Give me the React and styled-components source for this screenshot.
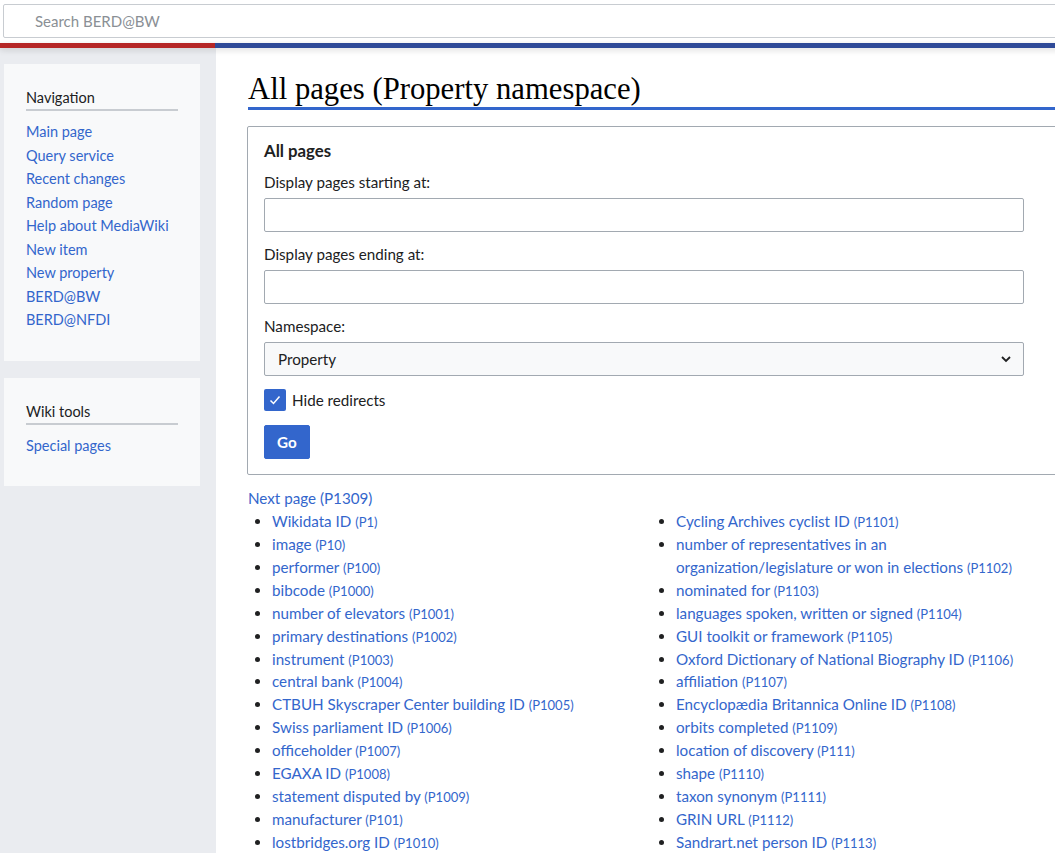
import React from "react";
import styled, { createGlobalStyle } from "styled-components";

const GlobalStyle = createGlobalStyle`
  html, body {
    margin: 0;
    padding: 0;
    overflow: hidden;
    background: #ffffff;
  }
  body {
    font-family: Lato, "Noto Sans", "Liberation Sans", sans-serif;
    color: #202122;
  }
`;

const Page = styled.div`
  width: 1120px;
  min-height: 853px;
  display: flex;
  flex-direction: column;
`;

const Header = styled.header`
  padding-top: 4px;
  background: #ffffff;
`;

const SearchInput = styled.input`
  box-sizing: border-box;
  display: block;
  width: 1100px;
  height: 34px;
  margin: 0 0 0 3px;
  padding: 0 0 0 31px;
  border: 1px solid #c8ccd1;
  border-radius: 2px;
  font-family: Lato, "Noto Sans", sans-serif;
  font-size: 15px;
  color: #202122;
  outline: none;
  &::placeholder {
    color: #8a8f95;
  }
`;

const Stripe = styled.div`
  margin-top: 5px;
  height: 5px;
  display: flex;
  position: relative;
  z-index: 1;
  box-shadow: 0 2px 6px rgba(0, 0, 0, 0.14);
`;

const StripePart = styled.div`
  width: ${(p) => p.$width || "auto"};
  flex: ${(p) => (p.$width ? "none" : "1")};
  background: ${(p) => p.$color};
`;

const Body = styled.div`
  flex: 1;
  display: flex;
`;

const Sidebar = styled.nav`
  width: 212px;
  flex: none;
  background: #eaecf0;
  padding: 16px 0 0 4px;
  display: flex;
  flex-direction: column;
  gap: 17px;
`;

const Portlet = styled.div`
  width: 196px;
  box-sizing: border-box;
  background: #f8f9fa;
  padding: 23px 22px 29px 22px;
`;

const PortletHeading = styled.h3`
  margin: 0;
  font-size: 14.5px;
  font-weight: 400;
  line-height: 21px;
  padding-bottom: 1px;
  border-bottom: 2px solid #c8ccd1;
  color: #202122;
`;

const PortletList = styled.ul`
  list-style: none;
  margin: 9px 0 0 0;
  padding: 0;
`;

const PortletItem = styled.li`
  font-size: 14.5px;
  line-height: 23.5px;
`;

const Link = styled.a`
  color: #3366cc;
  text-decoration: none;
`;

const Main = styled.main`
  flex: 1;
  padding: 24px 0 0 32px;
`;

const Title = styled.h1`
  margin: 0;
  font-family: "Liberation Serif", "DejaVu Serif", serif;
  font-weight: 400;
  font-size: 30.7px;
  line-height: 35px;
  color: #000000;
  border-bottom: 3px solid #3366cc;
`;

const FormBox = styled.fieldset`
  margin: 16px 0 0 -1px;
  padding: 13px 16px 15px 16px;
  border: 1px solid #a2a9b1;
  border-radius: 2px;
  min-width: 0;
`;

const Legend = styled.div`
  font-size: 16.8px;
  font-weight: 700;
  line-height: 22px;
  margin-bottom: 9px;
`;

const Field = styled.div`
  margin-bottom: ${(p) => p.$gap || "11px"};
`;

const Label = styled.label`
  display: block;
  font-size: 15.2px;
  line-height: 22px;
  margin-bottom: 5px;
`;

const TextInput = styled.input`
  display: block;
  box-sizing: border-box;
  width: 760px;
  height: 34px;
  margin: 0;
  border: 1px solid #a2a9b1;
  border-radius: 2px;
  background: #ffffff;
  font-size: 15px;
`;

const Select = styled.div`
  box-sizing: border-box;
  width: 760px;
  height: 34px;
  border: 1px solid #a2a9b1;
  border-radius: 2px;
  background: #f8f9fa;
  display: flex;
  align-items: center;
  justify-content: space-between;
  padding: 0 11px 0 13px;
  font-size: 15.2px;
  color: #202122;
`;

const CheckRow = styled.label`
  display: flex;
  align-items: center;
  gap: 6px;
  font-size: 15.2px;
  line-height: 22px;
  margin-bottom: 14px;
`;

const CheckBox = styled.span`
  width: 22px;
  height: 22px;
  box-sizing: border-box;
  border-radius: 2px;
  background: #3366cc;
  display: flex;
  align-items: center;
  justify-content: center;
`;

const GoButton = styled.button`
  height: 34px;
  padding: 0 12px;
  border: 1px solid #3366cc;
  border-radius: 2px;
  background: #3366cc;
  color: #ffffff;
  font-family: Lato, "Noto Sans", sans-serif;
  font-size: 15.2px;
  font-weight: 700;
  display: block;
`;

const NextLink = styled(Link)`
  display: block;
  margin-top: 12px;
  font-size: 15.2px;
  line-height: 22.9px;
`;

const Columns = styled.div`
  display: grid;
  grid-template-columns: 404px 404px;
`;

const PageList = styled.ul`
  margin: 0;
  padding: 0 20px 0 24px;
  list-style: disc;
`;

const PageItem = styled.li`
  font-size: 15.2px;
  line-height: 22.93px;
  &::marker {
    color: #202122;
  }
`;

const PropId = styled.span`
  font-size: 13px;
  line-height: 1;
`;

const navLinks = [
  "Main page",
  "Query service",
  "Recent changes",
  "Random page",
  "Help about MediaWiki",
  "New item",
  "New property",
  "BERD@BW",
  "BERD@NFDI",
];

const leftColumn = [
  ["Wikidata ID", "P1"],
  ["image", "P10"],
  ["performer", "P100"],
  ["bibcode", "P1000"],
  ["number of elevators", "P1001"],
  ["primary destinations", "P1002"],
  ["instrument", "P1003"],
  ["central bank", "P1004"],
  ["CTBUH Skyscraper Center building ID", "P1005"],
  ["Swiss parliament ID", "P1006"],
  ["officeholder", "P1007"],
  ["EGAXA ID", "P1008"],
  ["statement disputed by", "P1009"],
  ["manufacturer", "P101"],
  ["lostbridges.org ID", "P1010"],
];

const rightColumn = [
  ["Cycling Archives cyclist ID", "P1101"],
  ["number of representatives in an organization/legislature or won in elections", "P1102"],
  ["nominated for", "P1103"],
  ["languages spoken, written or signed", "P1104"],
  ["GUI toolkit or framework", "P1105"],
  ["Oxford Dictionary of National Biography ID", "P1106"],
  ["affiliation", "P1107"],
  ["Encyclopædia Britannica Online ID", "P1108"],
  ["orbits completed", "P1109"],
  ["location of discovery", "P111"],
  ["shape", "P1110"],
  ["taxon synonym", "P1111"],
  ["GRIN URL", "P1112"],
  ["Sandrart.net person ID", "P1113"],
];

const Chevron = () => (
  <svg width="12" height="12" viewBox="0 0 12 12">
    <path d="M2 4l4 4 4-4" fill="none" stroke="#202122" strokeWidth="1.8" />
  </svg>
);

const Check = () => (
  <svg width="14" height="14" viewBox="0 0 14 14">
    <path d="M2.5 7.5l3 3 6-7" fill="none" stroke="#ffffff" strokeWidth="1.5" />
  </svg>
);

const Portal = ({ title, links }) => (
  <Portlet>
    <PortletHeading>{title}</PortletHeading>
    <PortletList>
      {links.map((l) => (
        <PortletItem key={l}>
          <Link href="#">{l}</Link>
        </PortletItem>
      ))}
    </PortletList>
  </Portlet>
);

const PropertyList = ({ items }) => (
  <PageList>
    {items.map(([name, id]) => (
      <PageItem key={id}>
        <Link href="#">
          {name} <PropId>({id})</PropId>
        </Link>
      </PageItem>
    ))}
  </PageList>
);

const App = () => {
  return (
    <>
      <GlobalStyle />
      <Page>
        <Header>
          <SearchInput placeholder="Search BERD@BW" />
          <Stripe>
            <StripePart $width="215px" $color="#b52626" />
            <StripePart $color="#2f4a98" />
          </Stripe>
        </Header>
        <Body>
          <Sidebar>
            <Portal title="Navigation" links={navLinks} />
            <Portal title="Wiki tools" links={["Special pages"]} />
          </Sidebar>
          <Main>
            <Title>All pages (Property namespace)</Title>
            <FormBox>
              <Legend>All pages</Legend>
              <Field>
                <Label>Display pages starting at:</Label>
                <TextInput />
              </Field>
              <Field>
                <Label>Display pages ending at:</Label>
                <TextInput />
              </Field>
              <Field $gap="13px">
                <Label>Namespace:</Label>
                <Select>
                  <span>Property</span>
                  <Chevron />
                </Select>
              </Field>
              <CheckRow>
                <CheckBox>
                  <Check />
                </CheckBox>
                Hide redirects
              </CheckRow>
              <GoButton>Go</GoButton>
            </FormBox>
            <NextLink href="#">Next page (P1309)</NextLink>
            <Columns>
              <PropertyList items={leftColumn} />
              <PropertyList items={rightColumn} />
            </Columns>
          </Main>
        </Body>
      </Page>
    </>
  );
};

export default App;
